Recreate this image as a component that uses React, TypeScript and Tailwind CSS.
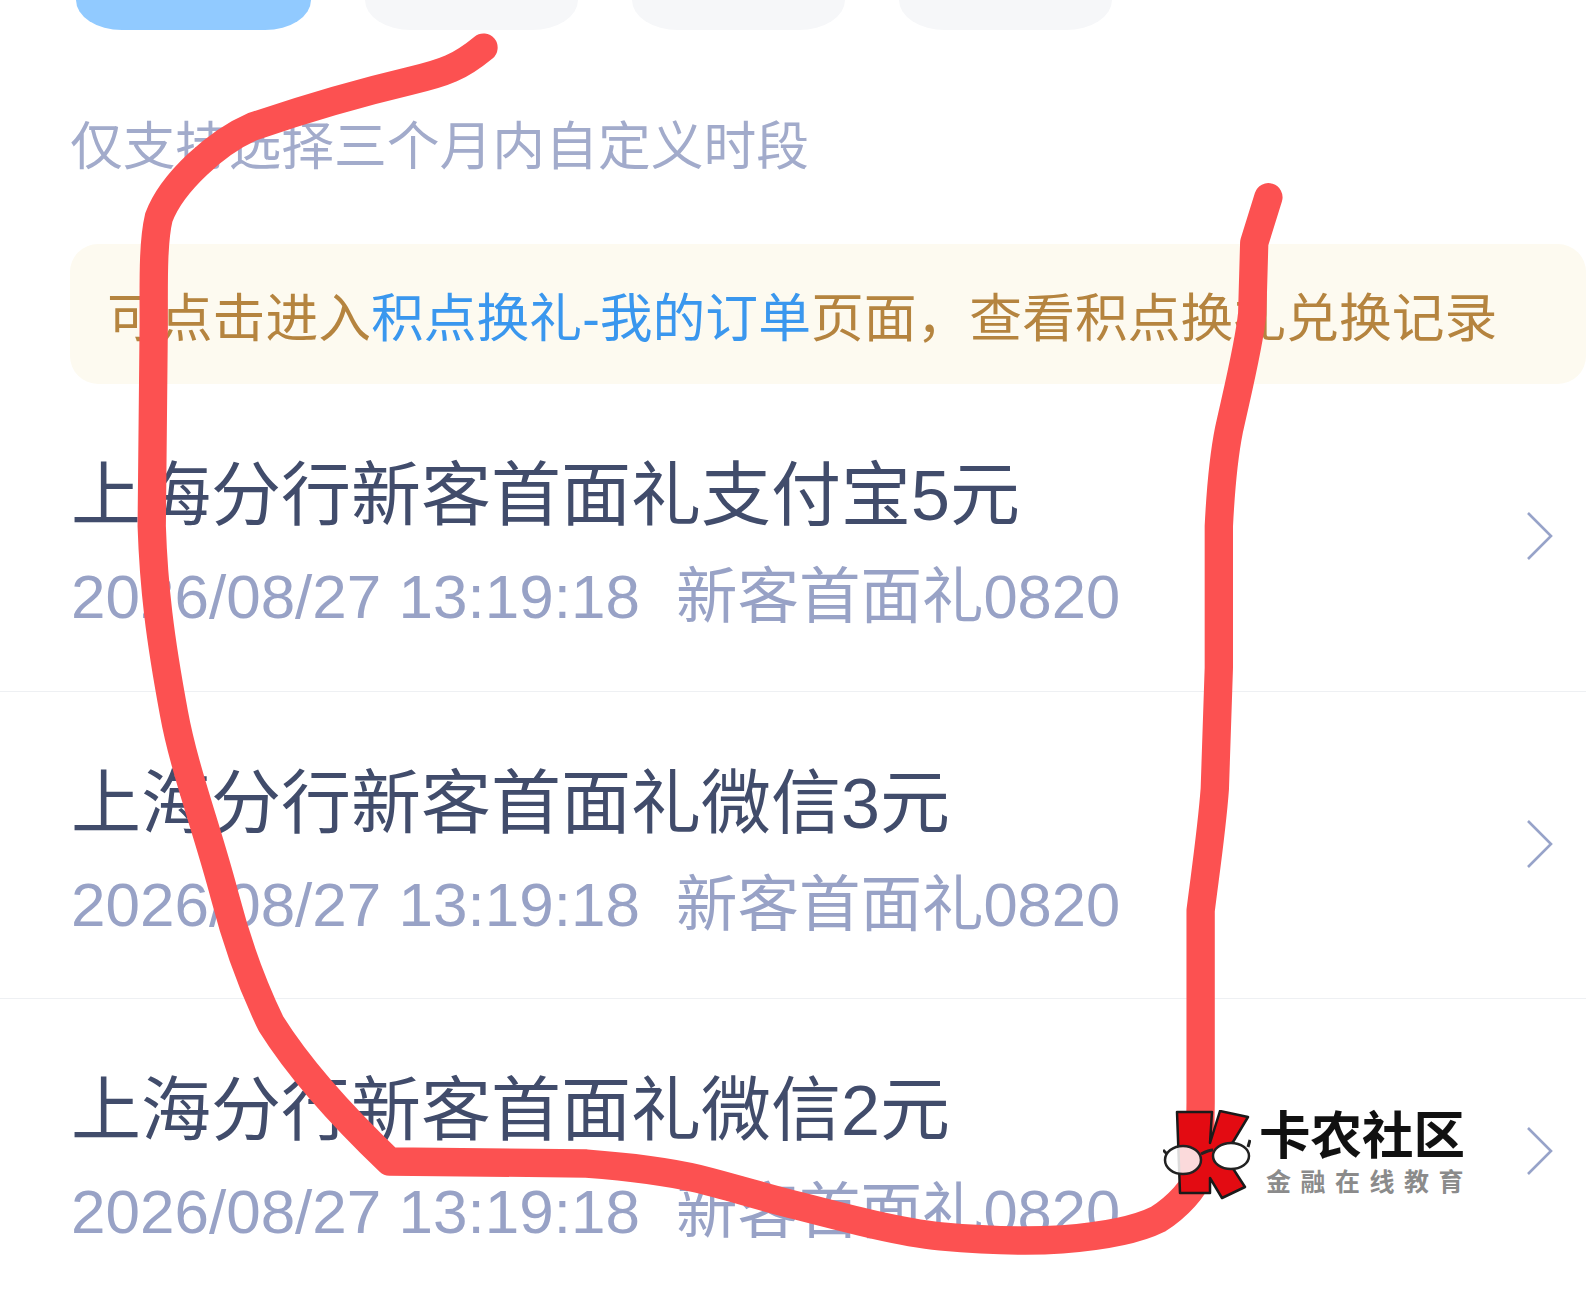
const FONT = "font-['Liberation_Sans','Noto_Sans_CJK_SC',sans-serif]";

const rows = ["上海分行新客首面礼支付宝5元", "上海分行新客首面礼微信3元", "上海分行新客首面礼微信2元"];

const Chevron = () => (
  <svg className="w-[27px] h-[50px] shrink-0" viewBox="0 0 27 50" fill="none">
    <path d="M2 2 L25 25 L2 48" stroke="#97a3c9" strokeWidth="2.6" />
  </svg>
);

const Row = ({ title, last }: { title: string; last?: boolean }) => (
  <div className={`flex items-start justify-between h-[307.5px] pl-[71px] pr-[33px] shrink-0 ${last ? "" : "border-b border-[#eef0f3]"}`}>
    <div className="flex flex-col pt-[66px]">
      <div className="text-[70px] leading-[92px] text-[#414c6b] whitespace-nowrap">{title}</div>
      <div className="flex items-baseline text-[62px] leading-[80px] mt-[15px] text-[#98a2c6] whitespace-nowrap">
        <span>2026/08/27 13:19:18</span>
        <span className="ml-[36px] text-[61.5px]">新客首面礼0820</span>
      </div>
    </div>
    <div className="pt-[127px]">
      <Chevron />
    </div>
  </div>
);

const Scribble = () => (
  <svg className="absolute inset-0 w-full h-full pointer-events-none" viewBox="0 0 1568 1277" preserveAspectRatio="none" fill="none">
    <path
      d="M478 47 C455 66 440 72 405 80 C350 93 300 108 250 125 C215 140 170 180 157 215 C151 240 152 280 152 320 L150 520 C152 580 158 630 172 705 C182 760 205 820 222 885 C235 935 250 975 268 1012 C295 1055 340 1105 385 1148 L580 1150 C620 1153 660 1158 690 1165 C730 1175 760 1185 790 1192 C840 1205 890 1218 930 1222 C975 1226 1020 1227 1050 1225 C1090 1222 1125 1215 1145 1205 C1165 1192 1180 1175 1186 1160 L1187 1090 L1187 900 C1192 860 1198 820 1201 780 L1205 660 L1205 520 C1207 480 1210 450 1215 425 C1225 380 1235 340 1238 310 L1240 240 L1254 195"
      stroke="#fc5151"
      strokeWidth="28"
      strokeLinecap="round"
      strokeLinejoin="round"
    />
  </svg>
);

const Watermark = () => (
  <div className="absolute left-[1163px] top-[1110px] flex items-start">
    <svg className="w-[88px] h-[90px] shrink-0" viewBox="0 0 88 90">
      <path d="M14 2 L49 2 L47 33 L57 1 L85 7 L70 32 L58 40 L82 77 L59 88 L47 68 L47 83 L17 83 Z" fill="#e30b12" stroke="#1a1a1a" strokeWidth="2.5" strokeLinejoin="round" />
      <path d="M0 40 L4 44 M38 44 C42 42 46 40 50 40 M85 37 L87 30" stroke="#222" strokeWidth="3" fill="none" />
      <ellipse cx="20" cy="50" rx="18" ry="14" fill="#ffffff" fillOpacity="0.85" stroke="#222" strokeWidth="2.5" />
      <ellipse cx="68" cy="46" rx="18" ry="13" fill="#ffffff" stroke="#222" strokeWidth="2.5" />
    </svg>
    <div className="flex flex-col ml-[8px]">
      <div className="text-[51.5px] leading-[52px] font-bold text-[#111] whitespace-nowrap">卡农社区</div>
      <div className="text-[25px] leading-[30px] tracking-[9.5px] text-[#8b8b8b] font-bold mt-[5px] ml-[7px] whitespace-nowrap">金融在线教育</div>
    </div>
  </div>
);

export default function App() {
  return (
    <div className={`relative w-[1586px] h-[1292px] overflow-hidden bg-white flex flex-col ${FONT}`}>
      <div className="flex gap-[54px] pl-[76px] shrink-0">
        <div className="w-[235px] h-[30px] rounded-[0_0_46px_46px/0_0_30px_30px] bg-[#91caff]" />
        <div className="w-[213px] h-[30px] rounded-[0_0_46px_46px/0_0_30px_30px] bg-[#f6f7f9]" />
        <div className="w-[213px] h-[30px] rounded-[0_0_46px_46px/0_0_30px_30px] bg-[#f6f7f9]" />
        <div className="w-[213px] h-[30px] rounded-[0_0_46px_46px/0_0_30px_30px] bg-[#f6f7f9]" />
      </div>
      <div className="pl-[70px] mt-[82px] text-[52.8px] leading-[70px] text-[#a2abcb] whitespace-nowrap shrink-0">
        仅支持选择三个月内自定义时段
      </div>
      <div className="ml-[70px] mt-[62px] h-[140px] rounded-[28px] bg-[#fdfaf0] flex items-center pl-[37px] pt-[9px] text-[52.8px] text-[#b5843f] whitespace-nowrap shrink-0">
        可点击进入<span className="text-[#3a97ee]">积点换礼-我的订单</span>页面，查看积点换礼兑换记录
      </div>
      {rows.map((t, i) => (
        <Row key={t} title={t} last={i === 2} />
      ))}
      <Scribble />
      <Watermark />
    </div>
  );
}
